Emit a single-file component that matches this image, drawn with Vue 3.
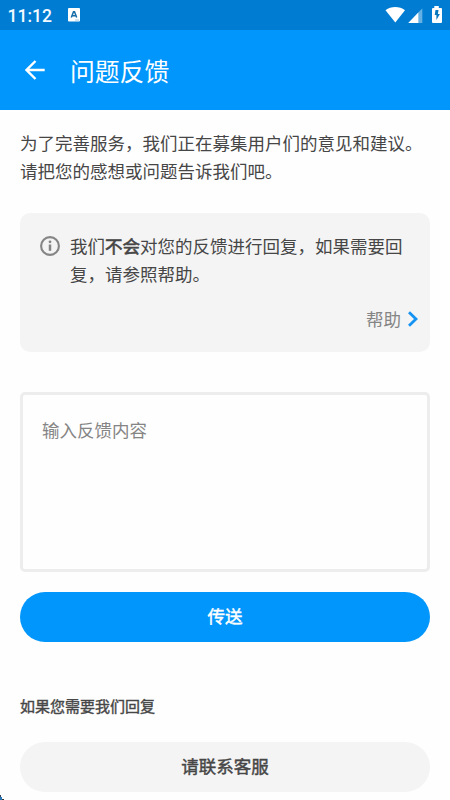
<script setup>
import { ref } from 'vue'

const feedback = ref('')
</script>

<template>
  <div class="screen">
    <div class="status-bar">
      <span class="clock">11:12</span>
      <svg class="lang-icon" width="12" height="14" viewBox="0 0 12 14">
        <rect width="12" height="13.5" rx="1" fill="#fff" />
        <path d="M3.3 9.5L5.5 3.800h1l2.200 5.700M4.200 7.700h3.600" fill="none" stroke="#176da8" stroke-width="1.5" />
        <path d="M7 12h4" stroke="#8abbe0" stroke-width="0.8" />
      </svg>
      <svg class="system-icons" width="58" height="18" viewBox="0 0 58 18">
        <path d="M0.5 4.2C6 0 14.500 0 20 4.200L10.300 16.500Z" fill="#fff" />
        <path d="M37.300 2.500V17H33.500V6.300Z" fill="#66b1e4" />
        <path d="M23.200 17L33.500 6.300V17Z" fill="#fff" />
        <path d="M49.300 0h4.500v2H56q1 0 1 1v13q0 1-1 1h-8q-1 0-1-1V3q0-1 1-1h1.300Z" fill="#fff" />
        <path d="M53.500 4h-3l-.8 5h1.700v5l3.500-6h-2Z" fill="#0878bd" />
      </svg>
    </div>

    <header class="app-bar">
      <svg class="back" width="20" height="20" viewBox="0 0 20 20" fill="none" stroke="#fff" stroke-width="2.400">
        <path d="M19.700 10H1.800M10.500 1L1.500 10l9 9" />
      </svg>
      <h1>问题反馈</h1>
    </header>

    <main>
      <p class="intro">为了完善服务，我们正在募集用户们的意见和建议。<br />请把您的感想或问题告诉我们吧。</p>

      <section class="notice">
        <div class="notice-body">
          <svg class="info" width="20" height="20" viewBox="0 0 20 20">
            <circle cx="10" cy="10" r="8.900" fill="none" stroke="#858585" stroke-width="2.100" />
            <circle cx="10" cy="5.800" r="1.400" fill="#858585" />
            <path d="M10 8.500v6.300" stroke="#858585" stroke-width="2.500" />
          </svg>
          <p>我们<b>不会</b>对您的反馈进行回复，如果需要回<br />复，请参照帮助。</p>
        </div>
        <a class="help">
          <span>帮助</span>
          <svg width="10" height="16" viewBox="0 0 10 16" fill="none" stroke="#1593f2" stroke-width="2.800">
            <path d="M1 1.200L8 8l-7 6.800" />
          </svg>
        </a>
      </section>

      <textarea v-model="feedback" placeholder="输入反馈内容"></textarea>
      <button class="send">传送</button>
      <h2>如果您需要我们回复</h2>
      <button class="contact">请联系客服</button>
    </main>
    <svg class="corner" width="4" height="5" viewBox="0 0 4 5">
      <path d="M0 0h1v2h1v1H0Z" fill="#35445b" />
      <path d="M0 2h2v3H0Z" fill="#2878b8" />
      <path d="M2 4h2v1H2Z" fill="#333" />
    </svg>
  </div>
</template>

<style>
body {
  margin: 0;
  overflow: hidden;
}
</style>

<style scoped>
.screen {
  position: relative;
  box-sizing: border-box;
  width: 450px;
  height: 800px;
  overflow: hidden;
  background: #fefefe;
  color: #464646;
  font-family: "Noto Sans CJK SC", sans-serif;
  font-size: 17.5px;
}
.status-bar {
  display: flex;
  box-sizing: border-box;
  height: 30px;
  padding: 0 8px 0 7.5px;
  background: #007dd2;
}
.clock {
  width: 45.5px;
  color: #f4faff;
  font: 500 17.5px/32px Roboto, sans-serif;
}
.lang-icon {
  margin: 8px 0 0 15px;
}
.system-icons {
  margin: 6px -1px 0 auto;
}
.app-bar {
  display: flex;
  align-items: center;
  height: 80px;
  padding-left: 25px;
  background: #0096fc;
}
h1 {
  margin: 0 0 1px 25px;
  color: #fff;
  font-size: 24.8px;
  font-weight: 400;
  line-height: 36px;
}
main {
  padding: 19px 20px 0;
}
p {
  margin: 0;
  line-height: 27.5px;
  white-space: nowrap;
}
.notice {
  box-sizing: border-box;
  height: 139px;
  margin-top: 29px;
  padding: 19px 12px 0 20px;
  border-radius: 10px;
  background: #f4f4f4;
}
.notice-body {
  display: flex;
  gap: 10px;
}
.info {
  flex: none;
  margin-top: 4px;
}
b {
  font-weight: 400;
  -webkit-text-stroke: 0.6px #464646;
}
.help {
  display: flex;
  align-items: center;
  justify-content: flex-end;
  gap: 7px;
  height: 28px;
  margin-top: 18px;
  color: #858585;
}
.help span {
  margin-bottom: 1px;
}
textarea {
  display: block;
  box-sizing: border-box;
  width: 100%;
  height: 180px;
  margin: 40px 0 20px;
  padding: 21px 19px;
  border: 3px solid #ededed;
  border-radius: 5px;
  outline: none;
  resize: none;
  background: #fefefe;
  color: #464646;
  font: inherit;
  line-height: 28px;
}
textarea::placeholder {
  color: #858585;
  opacity: 1;
}
button {
  display: block;
  width: 100%;
  height: 50px;
  padding: 0 0 2px;
  border: 0;
  border-radius: 25px;
  font: inherit;
  line-height: 48px;
}
.send {
  background: #0096fc;
  color: #fff;
  -webkit-text-stroke: 0.45px #fff;
}
h2 {
  margin: 50px 0 22px;
  font-size: 15px;
  font-weight: 400;
  line-height: 28px;
  -webkit-text-stroke: 0.4px #464646;
}
.contact {
  background: #f4f4f4;
  color: #464646;
  -webkit-text-stroke: 0.45px #464646;
}
.corner {
  position: absolute;
  bottom: 0;
  left: 0;
}
</style>
